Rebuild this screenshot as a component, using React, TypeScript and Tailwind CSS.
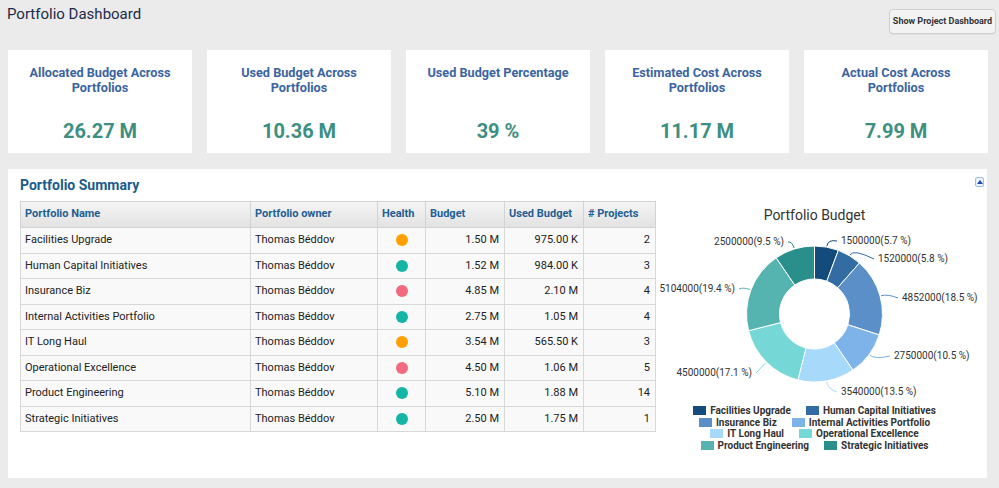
import React from 'react';

const cards = [
  { title: 'Allocated Budget Across Portfolios', value: '26.27 M' },
  { title: 'Used Budget Across Portfolios', value: '10.36 M' },
  { title: 'Used Budget Percentage', value: '39 %' },
  { title: 'Estimated Cost Across Portfolios', value: '11.17 M' },
  { title: 'Actual Cost Across Portfolios', value: '7.99 M' },
];

const ORANGE = '#ff9f00';
const TEAL = '#13b5a4';
const PINK = '#f26a7d';

const rows = [
  { name: 'Facilities Upgrade', health: ORANGE, budget: '1.50 M', used: '975.00 K', projects: 2 },
  { name: 'Human Capital Initiatives', health: TEAL, budget: '1.52 M', used: '984.00 K', projects: 3 },
  { name: 'Insurance Biz', health: PINK, budget: '4.85 M', used: '2.10 M', projects: 4 },
  { name: 'Internal Activities Portfolio', health: TEAL, budget: '2.75 M', used: '1.05 M', projects: 4 },
  { name: 'IT Long Haul', health: ORANGE, budget: '3.54 M', used: '565.50 K', projects: 3 },
  { name: 'Operational Excellence', health: PINK, budget: '4.50 M', used: '1.06 M', projects: 5 },
  { name: 'Product Engineering', health: TEAL, budget: '5.10 M', used: '1.88 M', projects: 14 },
  { name: 'Strategic Initiatives', health: TEAL, budget: '2.50 M', used: '1.75 M', projects: 1 },
];

// label positions in chart coords (svg origin at page 655,225)
const slices = [
  { name: 'Facilities Upgrade', value: 1500000, pct: '5.7', color: '#134b7c', lx: 185, ly: 16, side: 'r' },
  { name: 'Human Capital Initiatives', value: 1520000, pct: '5.8', color: '#336ba3', lx: 222, ly: 34, side: 'r' },
  { name: 'Insurance Biz', value: 4852000, pct: '18.5', color: '#5a8fc8', lx: 246, ly: 73, side: 'r' },
  { name: 'Internal Activities Portfolio', value: 2750000, pct: '10.5', color: '#7db3e8', lx: 238, ly: 131, side: 'r' },
  { name: 'IT Long Haul', value: 3540000, pct: '13.5', color: '#a7d9fb', lx: 185, ly: 167, side: 'r' },
  { name: 'Operational Excellence', value: 4500000, pct: '17.1', color: '#76d8d6', lx: 96, ly: 148, side: 'l' },
  { name: 'Product Engineering', value: 5104000, pct: '19.4', color: '#55b4af', lx: 79, ly: 64, side: 'l' },
  { name: 'Strategic Initiatives', value: 2500000, pct: '9.5', color: '#2a8f8b', lx: 128, ly: 17, side: 'l' },
];

const CX = 158.5;
const CY = 89;
const R = 68;
const IR = 35;

function pt(r: number, deg: number) {
  const a = ((deg - 90) * Math.PI) / 180;
  return [CX + r * Math.cos(a), CY + r * Math.sin(a)];
}

function arc(start: number, end: number) {
  const large = end - start > 180 ? 1 : 0;
  const [x1, y1] = pt(R, start);
  const [x2, y2] = pt(R, end);
  const [x3, y3] = pt(IR, end);
  const [x4, y4] = pt(IR, start);
  return `M${x1} ${y1} A${R} ${R} 0 ${large} 1 ${x2} ${y2} L${x3} ${y3} A${IR} ${IR} 0 ${large} 0 ${x4} ${y4} Z`;
}

function Donut() {
  const total = slices.reduce((s, d) => s + d.value, 0);
  let acc = 0;
  return (
    <svg width="317" height="180" className="overflow-visible block">
      {slices.map((s) => {
        const start = (acc / total) * 360;
        acc += s.value;
        const end = (acc / total) * 360;
        const mid = (start + end) / 2;
        const [x0, y0] = pt(R + 1, mid);
        const [x1, y1] = pt(R + 8, mid);
        const ex = s.side === 'r' ? s.lx - 4 : s.lx + 4;
        return (
          <g key={s.name}>
            <path d={arc(start, end)} fill={s.color} stroke="#ffffff" strokeWidth="1" />
            <path d={`M${x0} ${y0} Q${x1} ${y1} ${ex} ${s.ly}`} fill="none" stroke={s.color} strokeWidth="1" />
            <text
              x={s.lx}
              y={s.ly}
              dominantBaseline="middle"
              textAnchor={s.side === 'r' ? 'start' : 'end'}
              fontSize="10"
              fill="#333333"
              style={{ fontFamily: 'Roboto, sans-serif' }}
            >
              {s.value}({s.pct} %)
            </text>
          </g>
        );
      })}
    </svg>
  );
}

function LegendItem({ name, color }: { name: string; color: string }) {
  return (
    <div className="flex items-center gap-[4px]">
      <span className="w-[13px] h-[9px] inline-block" style={{ backgroundColor: color }} />
      <span className="text-[10px] font-bold text-[#333333] leading-[11px]">{name}</span>
    </div>
  );
}

export default function App() {
  const legendRows = [slices.slice(0, 2), slices.slice(2, 4), slices.slice(4, 6), slices.slice(6, 8)];

  return (
    <div className="w-[999px] h-[488px] bg-[#ebebeb] overflow-hidden" style={{ fontFamily: 'Roboto, "Liberation Sans", sans-serif' }}>
      {/* header */}
      <div className="flex justify-between items-start h-[50px]">
        <h1 className="text-[15px] text-[#1c2a48] pl-[7px] pt-[4px] leading-[20px]">Portfolio Dashboard</h1>
        <button className="mt-[9px] mr-[3px] w-[107px] h-[25px] rounded-[4px] border border-[#d0d0d0] bg-[#f3f3f3] text-[9px] font-bold text-[#333333] shadow-[0_1px_1px_rgba(0,0,0,0.05)]">
          Show Project Dashboard
        </button>
      </div>

      {/* KPI cards */}
      <div className="flex gap-[15px] px-[8px]">
        {cards.map((c) => (
          <div key={c.title} className="w-[184px] h-[103px] bg-white flex flex-col items-center pt-[15px]">
            <div className="text-[12.7px] font-bold text-[#3b64a0] leading-[15px] text-center px-[12px] h-[30px]">{c.title}</div>
            <div className="mt-[24px] text-[20px] font-bold text-[#3d8f81] leading-[24px]">{c.value}</div>
          </div>
        ))}
      </div>

      {/* summary panel */}
      <div className="mt-[16px] mx-[8px] w-[979px] h-[309px] bg-white">
        <div className="flex justify-between items-start pl-[12px] pr-[3px] pt-[7px] h-[32px]">
          <h2 className="text-[14px] font-bold text-[#1a5b8c] leading-[18px]">Portfolio Summary</h2>
          <div className="mt-[1px] w-[9px] h-[10px] rounded-[2px] border border-[#9cc0ec] bg-[#e9f2fd] flex items-center justify-center">
            <span className="w-0 h-0 border-l-[3px] border-r-[3px] border-b-[4px] border-l-transparent border-r-transparent border-b-[#1d4fa6]" />
          </div>
        </div>

        <div className="flex">
          <div className="pl-[12px]">
            <table className="border-collapse text-[11px] text-[#222222]">
              <thead>
                <tr className="h-[26px] bg-gradient-to-b from-[#f4f4f4] to-[#e2e2e2]">
                  <th className="w-[230px] border border-[#d3d3d3] text-left pl-[4px] font-bold text-[#1f5f93]">Portfolio Name</th>
                  <th className="w-[127px] border border-[#d3d3d3] text-left pl-[4px] font-bold text-[#1f5f93]">Portfolio owner</th>
                  <th className="w-[48px] border border-[#d3d3d3] text-left pl-[4px] font-bold text-[#1f5f93]">Health</th>
                  <th className="w-[79px] border border-[#d3d3d3] text-left pl-[4px] font-bold text-[#1f5f93]">Budget</th>
                  <th className="w-[79px] border border-[#d3d3d3] text-left pl-[4px] font-bold text-[#1f5f93]">Used Budget</th>
                  <th className="w-[72px] border border-[#d3d3d3] text-left pl-[4px] font-bold text-[#1f5f93]"># Projects</th>
                </tr>
              </thead>
              <tbody>
                {rows.map((r) => (
                  <tr key={r.name} className="h-[25.5px] bg-[#f9f9f9]">
                    <td className="border border-[#d8d8d8] pl-[4px]">{r.name}</td>
                    <td className="border border-[#d8d8d8] pl-[4px]">Thomas Béddov</td>
                    <td className="border border-[#d8d8d8]">
                      <div className="flex justify-center">
                        <span className="w-[12px] h-[12px] rounded-full" style={{ backgroundColor: r.health }} />
                      </div>
                    </td>
                    <td className="border border-[#d8d8d8] text-right pr-[5px]">{r.budget}</td>
                    <td className="border border-[#d8d8d8] text-right pr-[5px]">{r.used}</td>
                    <td className="border border-[#d8d8d8] text-right pr-[5px]">{r.projects}</td>
                  </tr>
                ))}
              </tbody>
            </table>
          </div>

          <div className="w-[317px] flex flex-col items-center">
            <div className="mt-[4px] text-[14px] text-[#333333] leading-[20px]">Portfolio Budget</div>
            <Donut />
            <div className="flex flex-col items-center">
              {legendRows.map((lr, i) => (
                <div key={i} className="flex gap-[15px] h-[11.5px] items-center">
                  {lr.map((s) => (
                    <LegendItem key={s.name} name={s.name} color={s.color} />
                  ))}
                </div>
              ))}
            </div>
          </div>
        </div>
      </div>
    </div>
  );
}
